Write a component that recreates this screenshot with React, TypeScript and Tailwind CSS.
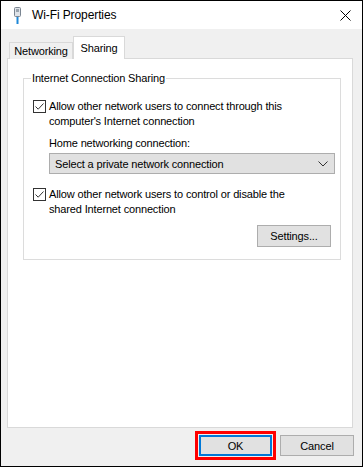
import React from "react";

const font = { fontFamily: '"Liberation Sans", Arial, sans-serif' };

function Check() {
  return (
    <div className="w-[13px] h-[13px] border border-[#333333] bg-white flex items-center justify-center shrink-0">
      <svg width="11" height="11" viewBox="0 0 11 11">
        <path d="M1.5 5.5 L4.2 8.2 L9.5 2.5" fill="none" stroke="#333" strokeWidth="1" />
      </svg>
    </div>
  );
}

export default function App() {
  return (
    <div
      className="w-[363px] h-[467px] border border-black bg-[#f0f0f0] flex flex-col text-[11px] tracking-[-0.15px] text-black leading-[14px] overflow-hidden"
      style={font}
    >
      {/* title bar */}
      <div className="h-[28px] bg-white flex items-center shrink-0">
        <svg className="ml-[12px]" width="10" height="17" viewBox="0 0 10 17">
          <rect x="1.5" y="0.5" width="6" height="9" rx="1" fill="#dfe3e8" stroke="#7a8591" />
          <rect x="3" y="2" width="3" height="3" fill="#9aa4ae" />
          <rect x="3.5" y="10" width="2" height="7" fill="#1e88d8" />
        </svg>
        <span className="ml-[9px] text-[12px] tracking-[-0.1px]">Wi-Fi Properties</span>
        <div className="ml-auto mr-[11px]">
          <svg width="11" height="11" viewBox="0 0 11 11">
            <path d="M0.5 0.5 L10.5 10.5 M10.5 0.5 L0.5 10.5" stroke="#000" strokeWidth="1" />
          </svg>
        </div>
      </div>

      {/* body */}
      <div className="flex-1 flex flex-col pl-[6px] pr-[9px] pt-[7px]">
        {/* tabs */}
        <div className="flex items-end h-[22px] relative z-10 pl-[2px]">
          <div className="h-[17px] mb-[-1px] w-[64px] border border-[#d9d9d9] border-b-0 bg-[#f0f0f0] flex items-center justify-center">
            Networking
          </div>
          <div className="h-[23px] mb-[-1px] w-[52px] border border-[#d9d9d9] border-b-0 bg-white flex items-center justify-center">
            Sharing
          </div>
        </div>
        {/* panel */}
        <div className="h-[370px] bg-white border border-[#d9d9d9] pt-[19px] pl-[15px] pr-[11px]">
          <div className="relative border border-[#dcdcdc] h-[182px] pt-[13px] pl-[9px]">
            <span className="absolute left-[7px] top-[-8px] bg-white px-[1px]">Internet Connection Sharing</span>
            <div className="flex items-start gap-[3px] mt-[8px]">
              <Check />
              <div className="mt-[-1px] leading-[15px]">
                Allow other network users to connect through this
                <br />
                computer's Internet connection
              </div>
            </div>
            <div className="ml-[16px] mt-[7px]">Home networking connection:</div>
            <div className="ml-[16px] mt-[3px] w-[286px] h-[21px] bg-[#e1e1e1] border border-[#adadad] flex items-center pl-[5px] pr-[6px]">
              <span>Select a private network connection</span>
              <svg className="ml-auto" width="10" height="6" viewBox="0 0 10 6">
                <path d="M0.5 0.5 L5 5 L9.5 0.5" fill="none" stroke="#333" strokeWidth="1" />
              </svg>
            </div>
            <div className="flex items-start gap-[3px] mt-[14px]">
              <Check />
              <div className="mt-[-1px] leading-[15px]">
                Allow other network users to control or disable the
                <br />
                shared Internet connection
              </div>
            </div>
            <div className="flex justify-end pr-[9px] mt-[8px]">
              <div className="w-[74px] h-[22px] bg-[#e1e1e1] border border-[#adadad] flex items-center justify-center">
                Settings...
              </div>
            </div>
          </div>
        </div>
        {/* buttons */}
        <div className="flex justify-end items-center gap-[4px] mt-[3px] -mr-[1px]">
          <div className="border-[3px] border-[#ff0000] p-[1px]">
            <div className="w-[73px] h-[21px] bg-[#e1e1e1] border-2 border-[#0078d7] flex items-center justify-center">
              OK
            </div>
          </div>
          <div className="w-[74px] h-[21px] bg-[#e1e1e1] border border-[#adadad] flex items-center justify-center">
            Cancel
          </div>
        </div>
      </div>
    </div>
  );
}
